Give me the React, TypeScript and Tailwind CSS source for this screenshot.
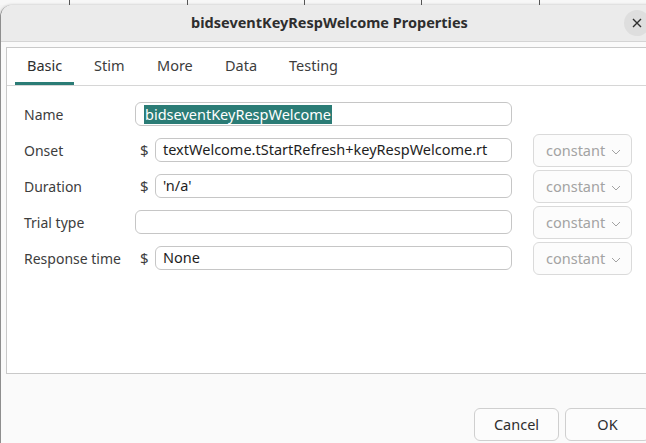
import React from "react";

const font = { fontFamily: '"Noto Sans", "Open Sans", sans-serif' };

function Row({
  label,
  dollar,
  value,
  selected,
  dropdown,
}: {
  label: string;
  dollar?: boolean;
  value?: string;
  selected?: boolean;
  dropdown?: boolean;
}) {
  return (
    <div className="flex h-[36px] items-center">
      <div className="w-[111px] text-[14px] text-[#3d3d3d]">{label}</div>
      <div className="flex w-[377px] items-center">
        {dollar && <div className="w-[20px] pl-[5px] text-[15px] text-[#3d3d3d]">$</div>}
        <div
          className={
            "flex h-[24px] flex-1 items-center rounded-[6px] border border-[#c6c6c6] bg-white text-[14.5px] text-[#1e1e1e] " +
            (selected ? "pl-[8px]" : "pl-[7px]")
          }
        >
          {selected ? (
            <span className="bg-[#2b7c76] px-[1px] leading-[19px] text-white">{value}</span>
          ) : (
            <span>{value}</span>
          )}
        </div>
      </div>
      {dropdown && (
        <div className="ml-[21px] mt-[1px] flex h-[33px] w-[99px] items-center rounded-[6px] border border-[#dadada] bg-[#fcfcfc] pl-[12px] text-[14.5px] text-[#a3a3a3]">
          <span>constant</span>
          <svg className="ml-[6px] mt-[2px]" width="10" height="6" viewBox="0 0 10 6">
            <path d="M1 1 L5 5 L9 1" fill="none" stroke="#a3a3a3" strokeWidth="1" />
          </svg>
        </div>
      )}
    </div>
  );
}

export default function App() {
  const tabs = [
    { t: "Basic", w: 67 },
    { t: "Stim", w: 63 },
    { t: "More", w: 68 },
    { t: "Data", w: 64 },
    { t: "Testing", w: 80 },
  ];
  return (
    <div className="relative h-[443px] w-[646px] overflow-hidden bg-[#f4f4f4]" style={font}>
      {/* background table strip */}
      <div className="flex h-[5px] bg-[#f7f7f7]">
        <div className="w-[69px]" />
        <div className="w-[118px] border-l border-[#555]" />
        <div className="w-[117px] border-l border-[#555]" />
        <div className="w-[117px] border-l border-[#555]" />
        <div className="w-[118px] border-l border-[#555]" />
        <div className="w-[100px] border-l border-[#555]" />
      </div>
      {/* window */}
      <div className="h-[460px] w-[658px] overflow-hidden rounded-tl-[12px] border-l border-[#8e8e8e] bg-[#fafafa] shadow-[0_0_3px_rgba(0,0,0,0.25)]">
        {/* title bar */}
        <div className="relative flex h-[37px] items-center justify-center border-b border-[#d4d4d4] bg-[#ebebeb]">
          <span className="text-[14.5px] font-bold text-[#2e2e2e]">bidseventKeyRespWelcome Properties</span>
          <div className="absolute left-[623px] top-[5px] flex h-[26px] w-[26px] items-center justify-center rounded-full bg-[#dedede]">
            <svg width="10" height="10" viewBox="0 0 10 10">
              <path d="M1 1 L9 9 M9 1 L1 9" stroke="#2e2e2e" strokeWidth="1.4" />
            </svg>
          </div>
        </div>
        {/* content */}
        <div className="pl-[5px] pr-[6px] pt-[5px]">
          <div className="h-[327px] border border-[#c9c9c9] bg-white">
            {/* tabs */}
            <div className="flex h-[38px] items-end border-b border-[#d6d6d6] pl-[8px]">
              {tabs.map((tab, i) => (
                <div key={tab.t} style={{ width: tab.w }} className="flex h-full flex-col">
                  <div
                    className={
                      "flex flex-1 items-center pl-[12px] pt-[1px] text-[14.5px] " +
                      (i === 0 ? "text-[#2e2e2e]" : "text-[#3d3d3d]")
                    }
                  >
                    {tab.t}
                  </div>
                  <div className={"h-[3px] " + (i === 0 ? "w-[59px] bg-[#2b7c76]" : "")} />
                </div>
              ))}
            </div>
            {/* form */}
            <div className="pl-[17px] pt-[10px]">
              <Row label="Name" value="bidseventKeyRespWelcome" selected />
              <Row label="Onset" dollar value="textWelcome.tStartRefresh+keyRespWelcome.rt" dropdown />
              <Row label="Duration" dollar value="'n/a'" dropdown />
              <Row label="Trial type" value="" dropdown />
              <Row label="Response time" dollar value="None" dropdown />
            </div>
          </div>
          {/* buttons */}
          <div className="mt-[34px] flex justify-end gap-[6px] pr-[2px]">
            <div className="flex h-[33px] w-[85px] items-center justify-center rounded-[6px] border border-[#cfcfcf] bg-[#fcfcfc] text-[14.5px] text-[#2e2e2e]">
              Cancel
            </div>
            <div className="flex h-[33px] w-[85px] items-center justify-center rounded-[6px] border border-[#cfcfcf] bg-[#fcfcfc] text-[14.5px] text-[#2e2e2e]">
              OK
            </div>
          </div>
        </div>
      </div>
    </div>
  );
}
